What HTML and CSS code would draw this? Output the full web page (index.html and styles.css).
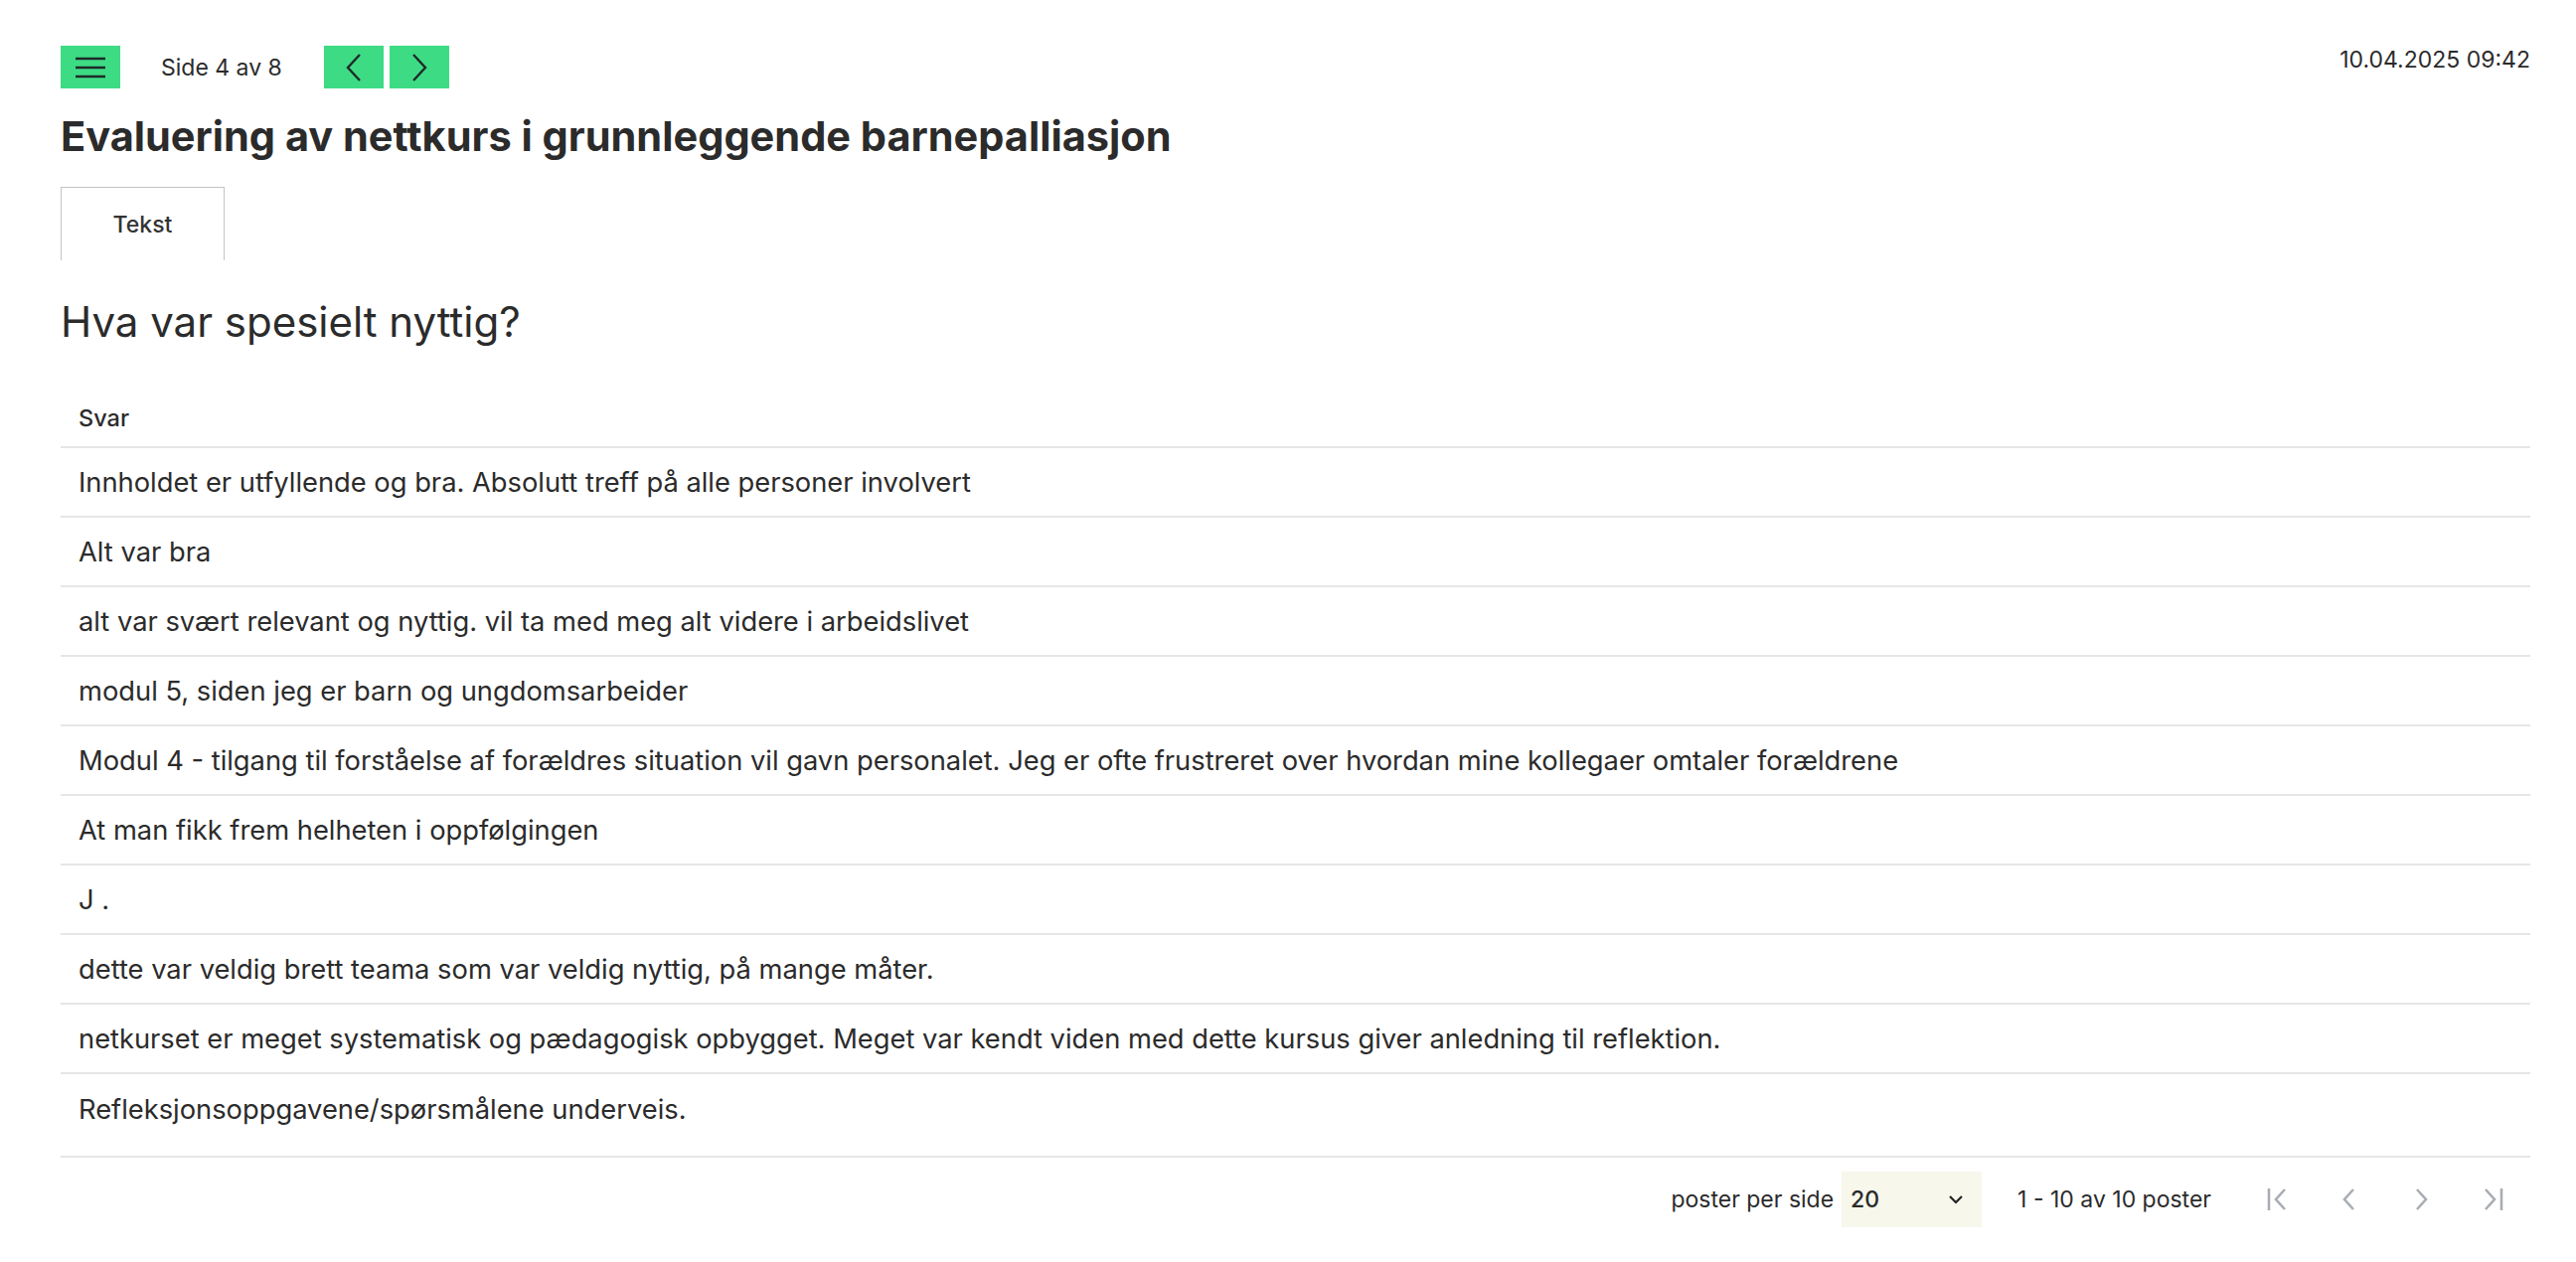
FILE: index.html
```html
<!DOCTYPE html>
<html lang="no">
<head>
<meta charset="utf-8">
<title>Evaluering av nettkurs i grunnleggende barnepalliasjon</title>
<link rel="stylesheet" href="styles.css">
</head>
<body>
<div class="page">
  <header class="topbar">
    <div class="nav">
      <button class="btn menu" aria-label="Meny">
        <svg width="34" height="24" viewBox="0 0 34 24"><path d="M2 3h30M2 12h30M2 21h30" stroke="#1f2a2a" stroke-width="2.4" fill="none"/></svg>
      </button>
      <span class="pageinfo">Side 4 av 8</span>
      <div class="arrows">
        <button class="btn arrow" aria-label="Forrige">
          <svg width="20" height="30" viewBox="0 0 20 30"><path d="M16 2L4 15l12 13" stroke="#1f2a2a" stroke-width="2.4" fill="none"/></svg>
        </button>
        <button class="btn arrow" aria-label="Neste">
          <svg width="20" height="30" viewBox="0 0 20 30"><path d="M4 2l12 13L4 28" stroke="#1f2a2a" stroke-width="2.4" fill="none"/></svg>
        </button>
      </div>
    </div>
    <div class="date">10.04.2025 09:42</div>
  </header>

  <h1 class="title">Evaluering av nettkurs i grunnleggende barnepalliasjon</h1>

  <div class="tabs">
    <div class="tab">Tekst</div>
  </div>

  <h2 class="question">Hva var spesielt nyttig?</h2>

  <div class="table">
    <div class="thead">Svar</div>
    <div class="row">Innholdet er utfyllende og bra. Absolutt treff på alle personer involvert</div>
    <div class="row">Alt var bra</div>
    <div class="row">alt var svært relevant og nyttig. vil ta med meg alt videre i arbeidslivet</div>
    <div class="row">modul 5, siden jeg er barn og ungdomsarbeider</div>
    <div class="row">Modul 4 - tilgang til forståelse af forældres situation vil gavn personalet. Jeg er ofte frustreret over hvordan mine kollegaer omtaler forældrene</div>
    <div class="row">At man fikk frem helheten i oppfølgingen</div>
    <div class="row">J .</div>
    <div class="row">dette var veldig brett teama som var veldig nyttig, på mange måter.</div>
    <div class="row">netkurset er meget systematisk og pædagogisk opbygget. Meget var kendt viden med dette kursus giver anledning til reflektion.</div>
    <div class="row last">Refleksjonsoppgavene/spørsmålene underveis.</div>
  </div>

  <div class="pager">
    <span class="pp-label">poster per side</span>
    <div class="select">
      <span>20</span>
      <svg width="16" height="10" viewBox="0 0 16 10"><path d="M2 2l6 6 6-6" stroke="#222" stroke-width="2.2" fill="none"/></svg>
    </div>
    <span class="count">1 - 10 av 10 poster</span>
    <div class="pnav">
      <svg width="24" height="26" viewBox="0 0 24 26"><path d="M3 2v22M19 3L10 13l9 10" stroke="#a9adb3" stroke-width="2.6" fill="none"/></svg>
      <svg width="24" height="26" viewBox="0 0 24 26"><path d="M16 3L7 13l9 10" stroke="#a9adb3" stroke-width="2.6" fill="none"/></svg>
      <svg width="24" height="26" viewBox="0 0 24 26"><path d="M8 3l9 10-9 10" stroke="#a9adb3" stroke-width="2.6" fill="none"/></svg>
      <svg width="24" height="26" viewBox="0 0 24 26"><path d="M5 3l9 10-9 10M21 2v22" stroke="#a9adb3" stroke-width="2.6" fill="none"/></svg>
    </div>
  </div>
</div>
</body>
</html>
```

FILE: styles.css
```css
* { box-sizing: border-box; }
html, body { margin: 0; padding: 0; background: #fff; }
body {
  font-family: Inter, "Noto Sans", sans-serif;
  color: #2b2b2b;
}
.page {
  padding: 46px 46px 0 61px;
}
.topbar {
  display: flex;
  justify-content: space-between;
  align-items: flex-start;
}
.nav {
  display: flex;
  align-items: center;
}
.btn {
  border: 0;
  padding: 0;
  margin: 0;
  background: #3ddc84;
  height: 43px;
  width: 60px;
  display: flex;
  align-items: center;
  justify-content: center;
  cursor: pointer;
}
.pageinfo {
  font-size: 23px;
  margin: 0 42px 0 41px;
  color: #2b2b2b;
}
.arrows {
  display: flex;
  gap: 6px;
}
.date {
  font-size: 23px;
  margin-top: 0;
}
.title {
  font-size: 41.5px;
  font-weight: 700;
  margin: 22px 0 0;
  line-height: 52px;
}
.tabs {
  margin-top: 25px;
  display: flex;
}
.tab {
  width: 165px;
  height: 74px;
  border: 1px solid #c4c4c4;
  border-bottom: 0;
  display: flex;
  align-items: center;
  justify-content: center;
  font-size: 23px;
  font-weight: 500;
  color: #333;
}
.question {
  font-size: 42px;
  font-weight: 400;
  margin: 34px 0 0;
  line-height: 56px;
}
.table {
  margin-top: 39px;
  border-bottom: 2px solid #e6e6e6;
}
.thead {
  height: 60px;
  display: flex;
  align-items: center;
  padding-left: 18px;
  font-size: 23.5px;
  font-weight: 500;
  border-bottom: 2px solid #e6e6e6;
}
.row {
  height: 70px;
  display: flex;
  align-items: center;
  padding-left: 18px;
  font-size: 27.3px;
  border-bottom: 2px solid #e6e6e6;
}
.row.last {
  border-bottom: 0;
  height: 82px;
  padding-bottom: 12px;
}
.pager {
  display: flex;
  justify-content: flex-end;
  align-items: center;
  margin-top: 14px;
  height: 56px;
}
.pp-label {
  font-size: 23px;
  margin-right: 8px;
}
.select {
  width: 141px;
  height: 56px;
  background: #f7f7ec;
  display: flex;
  align-items: center;
  justify-content: space-between;
  padding: 0 18px 0 9px;
  font-size: 23px;
  font-weight: 500;
}
.count {
  font-size: 23px;
  margin-left: 36px;
}
.pnav {
  display: flex;
  gap: 48px;
  margin-left: 55px;
  margin-right: 26px;
}
```
